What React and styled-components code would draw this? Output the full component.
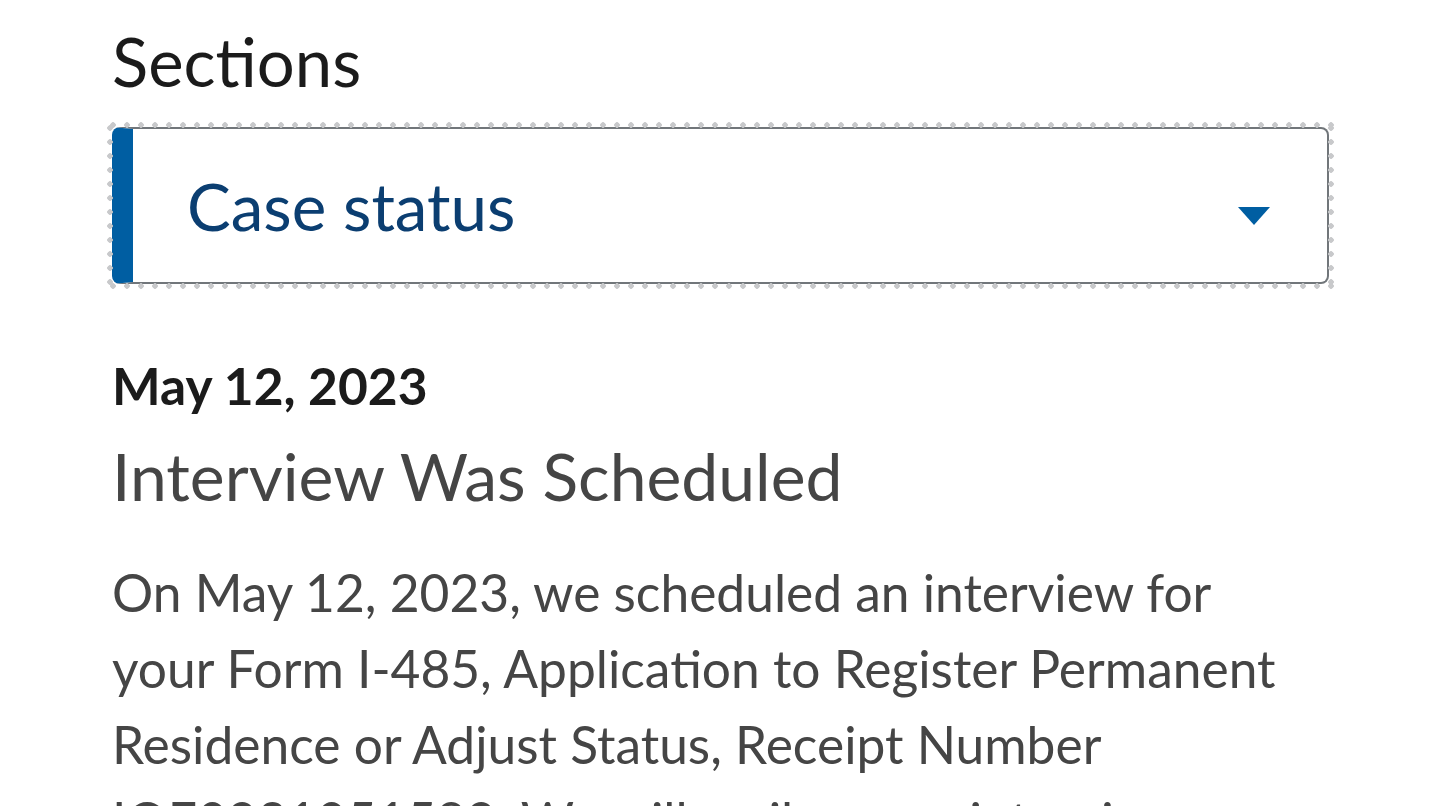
import React from 'react';
import styled, { createGlobalStyle } from 'styled-components';

const Global = createGlobalStyle`
  html, body {
    margin: 0;
    padding: 0;
    background: #fff;
  }
  body {
    font-family: 'Lato', 'Noto Sans', sans-serif;
    overflow: hidden;
  }
`;

const Page = styled.div`
  width: 1217px;
  padding: 21px 0 0 112px;
`;

const Label = styled.label`
  display: block;
  font-size: 67px;
  line-height: 80px;
  color: #1b1b1b;
  margin-bottom: 26px;
`;

const SelectBox = styled.div`
  position: relative;
  display: flex;
  align-items: center;
  justify-content: space-between;
  height: 157px;
  box-sizing: border-box;
  border: 2px solid #71767a;
  border-left: 21px solid #005ea2;
  border-radius: 8px;
  padding: 0 57px 0 54px;

  &::after {
    content: '';
    position: absolute;
    top: -8px;
    bottom: -8px;
    left: -27px;
    right: -8px;
    pointer-events: none;
    background:
      radial-gradient(circle, #c8c9cb 2.5px, transparent 3px) 0 0 / 14px 8px repeat-x,
      radial-gradient(circle, #c8c9cb 2.5px, transparent 3px) 0 100% / 14px 8px repeat-x,
      radial-gradient(circle, #c8c9cb 2.5px, transparent 3px) 0 0 / 8px 14px repeat-y,
      radial-gradient(circle, #c8c9cb 2.5px, transparent 3px) 100% 0 / 8px 14px repeat-y;
  }
`;

const SelectText = styled.span`
  font-size: 65.5px;
  color: #0b3e71;
`;

const Caret = styled.svg`
  width: 32px;
  height: 18px;
  display: block;
  margin-top: 21px;
`;

const DateLine = styled.div`
  font-size: 51.5px;
  font-weight: 700;
  color: #1b1b1b;
  line-height: 60px;
  margin-top: 71px;
`;

const Heading = styled.h2`
  font-size: 66px;
  font-weight: 400;
  color: #454545;
  line-height: 80px;
  margin: 21px 0 0;
`;

const Body = styled.p`
  max-width: 1195px;
  font-size: 51.5px;
  line-height: 76px;
  color: #454545;
  margin: 38px 0 0;
`;

export default function App() {
  return (
    <Page>
      <Global />
      <Label>Sections</Label>
      <SelectBox>
        <SelectText>Case status</SelectText>
        <Caret viewBox="0 0 32 18">
          <path d="M0 0 H32 L16 18 Z" fill="#005ea2" />
        </Caret>
      </SelectBox>
      <DateLine>May 12, 2023</DateLine>
      <Heading>Interview Was Scheduled</Heading>
      <Body>
        On May 12, 2023, we scheduled an interview for your Form I-485, Application to Register
        Permanent Residence or Adjust Status, Receipt Number IOE0921051589. We will mail you an
        interview notice.
      </Body>
    </Page>
  );
}
